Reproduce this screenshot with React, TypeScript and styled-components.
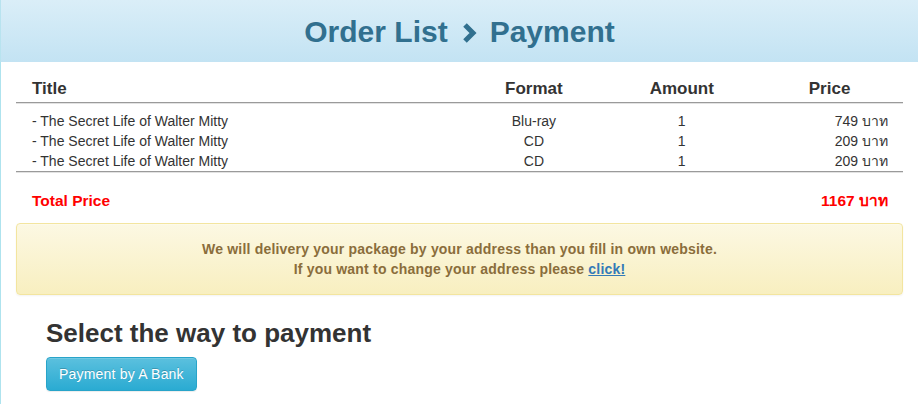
import React from "react";
import styled, { createGlobalStyle } from "styled-components";

const Global = createGlobalStyle`
  html, body { margin: 0; padding: 0; background: #fff; }
  body { font-family: "Liberation Sans", Arial, "Noto Sans", sans-serif; color: #333; font-size: 14px; }
  * { box-sizing: border-box; }
`;

const Page = styled.div`
  width: 918px;
  min-height: 404px;
  display: flex;
  flex-direction: column;
`;

const Header = styled.header`
  height: 62px;
  display: flex;
  align-items: center;
  justify-content: center;
  background: linear-gradient(to bottom, #daeef8 0%, #c3e3f3 100%);
  border-left: 1px solid #b8e3ef;
`;

const HeaderTitle = styled.h1`
  margin: 0;
  display: flex;
  align-items: center;
  gap: 13px;
  font-size: 30px;
  line-height: 34px;
  font-weight: bold;
  color: #31708f;
  padding-top: 2px;
`;

const Chevron = styled.svg`
  width: 16px;
  height: 22px;
  margin-top: 1px;
`;

const Content = styled.main`
  flex: 1;
  border-left: 1px solid #aee3ee;
  padding: 10px 15px 0 15px;
`;

const Grid = styled.div`
  display: grid;
  grid-template-columns: 3fr 1fr 1fr 1fr;
`;

const HeadRow = styled(Grid)`
  border-bottom: 1px solid #9a9a9a;
  box-shadow: 0 1px 0 #e2e2e2;
  padding: 5px 0 1px;
`;

const HeadCell = styled.div<{ $align?: string }>`
  font-size: 17px;
  line-height: 24px;
  font-weight: bold;
  color: #333;
  text-align: ${(p) => p.$align || "center"};
  padding: 0 15px 0 16px;
`;

const Body = styled.div`
  padding-top: 8px;
  border-bottom: 1px solid #9a9a9a;
  box-shadow: 0 1px 0 #e2e2e2;
`;

const Cell = styled.div<{ $align?: string }>`
  font-size: 14px;
  line-height: 20px;
  color: #333;
  text-align: ${(p) => p.$align || "center"};
  padding: 0 15px 0 16px;
  white-space: nowrap;
`;

const TotalRow = styled.div`
  display: flex;
  justify-content: space-between;
  padding: 18px 15px 11px 16px;
  font-size: 15.5px;
  line-height: 22px;
  font-weight: bold;
  color: #ff0000;
`;

const Alert = styled.div`
  border: 1px solid #f3e59f;
  border-radius: 4px;
  background: linear-gradient(to bottom, #fcf8e3 0%, #f8efc0 100%);
  box-shadow: 0 1px 0 rgba(255, 255, 255, 0.25) inset, 0 1px 2px rgba(0, 0, 0, 0.05);
  padding: 15px;
  text-align: center;
  color: #8a6d3b;
  font-size: 14px;
  line-height: 20px;
  font-weight: bold;
  letter-spacing: 0.2px;
`;

const AlertLink = styled.a`
  color: #337ab7;
  text-decoration: underline;
  font-weight: bold;
`;

const Section = styled.section`
  padding: 24px 0 0 30px;
  display: flex;
  flex-direction: column;
  align-items: flex-start;
`;

const SectionTitle = styled.h2`
  margin: 0 0 10px;
  font-size: 26px;
  line-height: 28px;
  font-weight: bold;
  color: #333;
`;

const InfoButton = styled.button`
  font-family: inherit;
  font-size: 14px;
  line-height: 20px;
  letter-spacing: 0.2px;
  padding: 6px 12px;
  color: #fff;
  border: 1px solid #28a4c9;
  border-radius: 4px;
  background: linear-gradient(to bottom, #5bc0de 0%, #2aabd2 100%);
  text-shadow: 0 -1px 0 rgba(0, 0, 0, 0.2);
  box-shadow: inset 0 1px 0 rgba(255, 255, 255, 0.15), 0 1px 1px rgba(0, 0, 0, 0.075);
  cursor: pointer;
`;

const items = [
  { title: "- The Secret Life of Walter Mitty", format: "Blu-ray", amount: 1, price: 749 },
  { title: "- The Secret Life of Walter Mitty", format: "CD", amount: 1, price: 209 },
  { title: "- The Secret Life of Walter Mitty", format: "CD", amount: 1, price: 209 },
];

export default function App() {
  const total = items.reduce((s, i) => s + i.price * i.amount, 0);
  return (
    <Page>
      <Global />
      <Header>
        <HeaderTitle>
          <span>Order List</span>
          <Chevron viewBox="0 0 16 22" aria-hidden="true">
            <polyline points="4,3 12,11 4,19" fill="none" stroke="#31708f" strokeWidth="5" strokeLinejoin="miter" strokeLinecap="butt" />
          </Chevron>
          <span>Payment</span>
        </HeaderTitle>
      </Header>
      <Content>
        <HeadRow>
          <HeadCell $align="left">Title</HeadCell>
          <HeadCell>Format</HeadCell>
          <HeadCell>Amount</HeadCell>
          <HeadCell>Price</HeadCell>
        </HeadRow>
        <Body>
          {items.map((it, i) => (
            <Grid key={i}>
              <Cell $align="left">{it.title}</Cell>
              <Cell>{it.format}</Cell>
              <Cell>{it.amount}</Cell>
              <Cell $align="right">{it.price} บาท</Cell>
            </Grid>
          ))}
        </Body>
        <TotalRow>
          <span>Total Price</span>
          <span>{total} บาท</span>
        </TotalRow>
        <Alert>
          We will delivery your package by your address than you fill in own website.
          <br />
          If you want to change your address please <AlertLink href="#">click!</AlertLink>
        </Alert>
        <Section>
          <SectionTitle>Select the way to payment</SectionTitle>
          <InfoButton>Payment by A Bank</InfoButton>
        </Section>
      </Content>
    </Page>
  );
}
